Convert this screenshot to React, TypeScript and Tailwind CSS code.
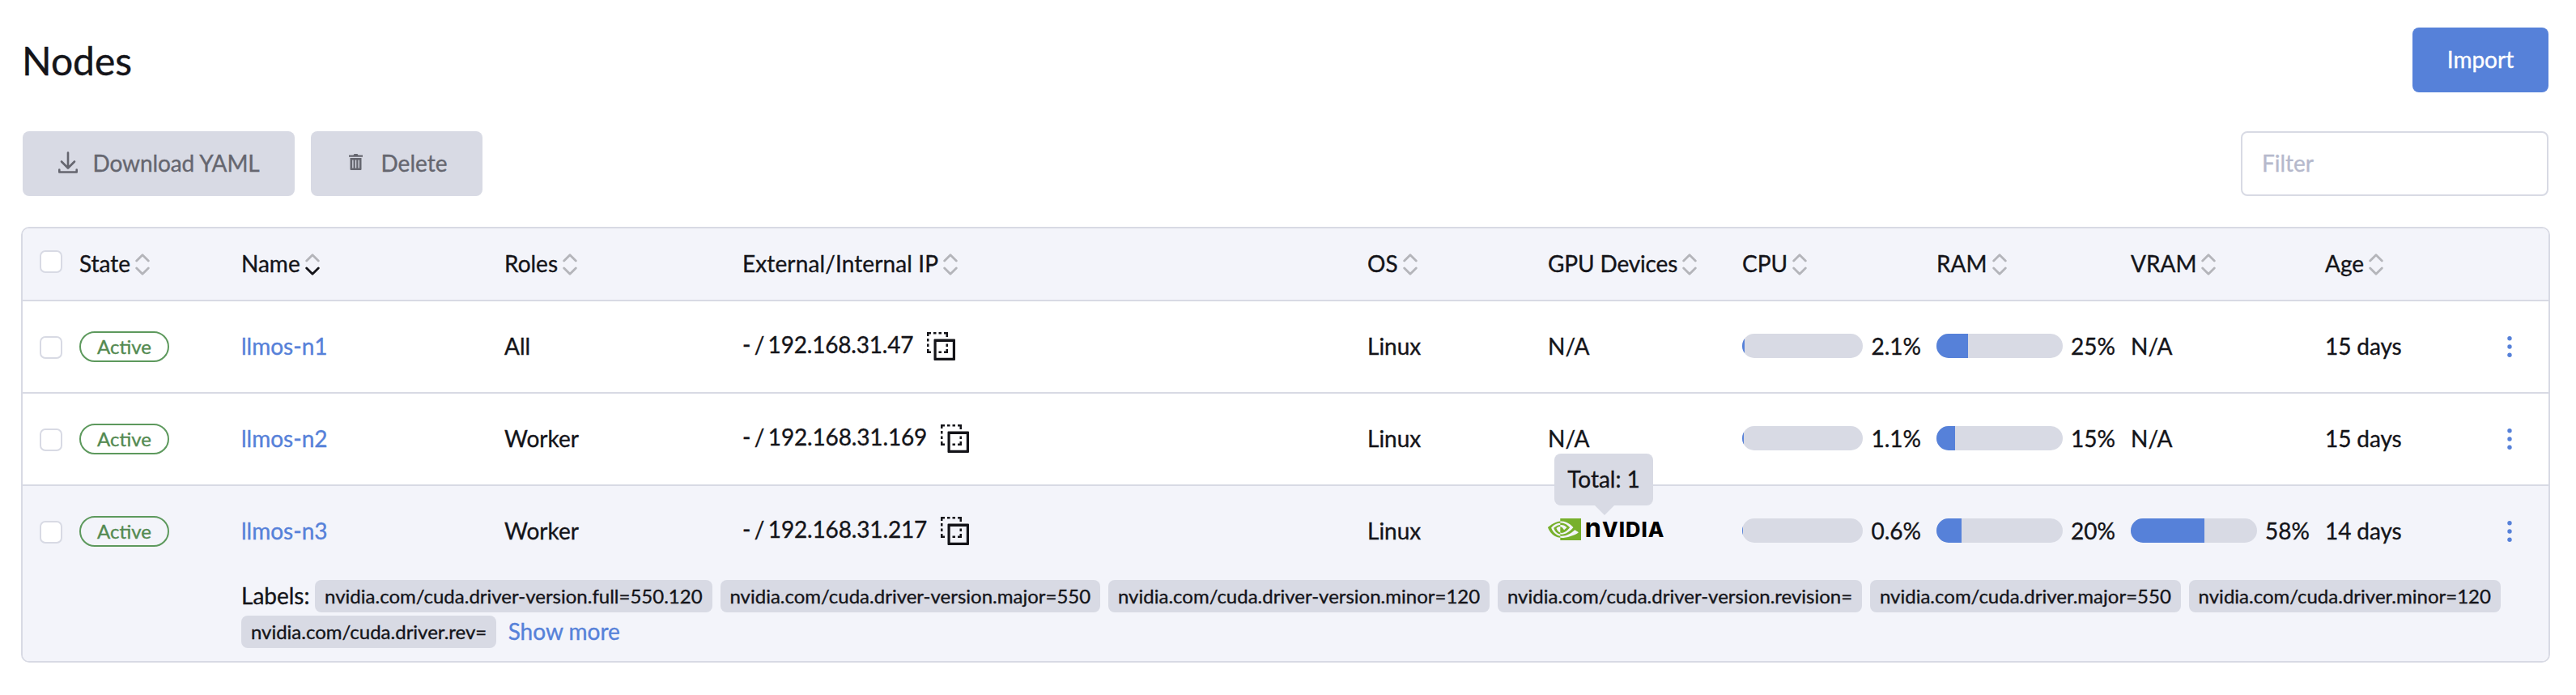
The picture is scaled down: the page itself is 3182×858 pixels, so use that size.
import React from "react";
import { SiNvidia } from "react-icons/si";

const COLS =
  "grid grid-cols-[70px_200px_325px_294px_772px_223px_240px_240px_240px_240px_170px_106px]";

function Sort({ active = false }: { active?: boolean }) {
  return (
    <svg className="mt-[2px] ml-[6px] h-[27px] w-[18px] shrink-0" viewBox="0 0 18 27" fill="none" strokeWidth="2.8" strokeLinecap="round" strokeLinejoin="round">
      <path d="M1.700 9 L9 1.700 L16.300 9" stroke="#b4b5ba" />
      <path d="M1.700 18 L9 25.300 L16.300 18" stroke={active ? "#141419" : "#b4b5ba"} />
    </svg>
  );
}

function Check({ className = "" }: { className?: string }) {
  return <div className={"h-7 w-7 rounded-[7px] border-2 border-[#d8dae4] bg-white " + className} />;
}

function CopyIcon() {
  return (
    <svg className="-mt-px ml-[16.5px] h-[35px] w-[35px] shrink-0" viewBox="0 0 35 35" fill="#141419">
      <path d="M0 0h5v2.500H2.500V5H0zM8 0h3.500v2.500H8zM14.500 0H18v2.500h-3.500zM21 0h5v6h-2.500V2.500H21zM0 8h2.500v3.500H0zM0 14.500h2.500V18H0zM0 21h2.500v2.500H5V26H0zM23.500 14.500H26V18h-2.500zM23.500 21H26v5h-5v-2.500h2.500zM14.500 23.500H18V26h-3.500z" />
      <path fillRule="evenodd" d="M9.500 8.500h24.500q1 0 1 1v24.500q0 1-1 1H9.500q-1 0-1-1V9.500q0-1 1-1zM11.700 12v19.800H31.800V12z" />
    </svg>
  );
}

function Bar({ value }: { value: number }) {
  const label = value + "%";
  return (
    <div className="flex items-center pr-[19px]">
      <div className="-mt-[2px] h-[30px] flex-1 overflow-hidden rounded-[15px] bg-[#d8dae4]">
        <div className="h-full bg-[#5681d9]" style={{ width: label }} />
      </div>
      <span className="-mt-[2px] ml-[10px]">{label}</span>
    </div>
  );
}

function Nvidia() {
  return (
    <div className="relative flex h-7 items-center">
      <SiNvidia className="-mt-[5px] h-[41px] w-[41px] shrink-0 text-[#77b02c]" />
      <span className="-mt-[7px] ml-[4.5px] flex items-baseline font-['Inter',sans-serif] leading-7 tracking-[1px] text-black [-webkit-text-stroke:0]">
        <span className="text-[33px] font-bold">n</span>
        <span className="text-[25.5px] font-extrabold">VIDIA</span>
      </span>
      <div className="absolute -top-[82px] left-[8px] flex h-16 w-[122px] items-center justify-center rounded-[8px] bg-[#d8dae4] pb-[2px]">
        Total: 1
        <svg className="absolute top-16 left-[50px] h-3 w-6" viewBox="0 0 24 12" fill="#d8dae4">
          <path d="M0 0h24L12 12z" />
        </svg>
      </div>
    </div>
  );
}

type Node = { name: string; role: string; ip: string; ipClass: string; cpu: number; ram: number; vram?: number; age: string };

const nodes: Node[] = [
  { name: "llmos-n1", role: "All", ip: "192.168.31.47", ipClass: "tracking-[-0.2px]", cpu: 2.1, ram: 25, age: "15 days" },
  { name: "llmos-n2", role: "Worker", ip: "192.168.31.169", ipClass: "tracking-[-0.15px]", cpu: 1.1, ram: 15, age: "15 days" },
  { name: "llmos-n3", role: "Worker", ip: "192.168.31.217", ipClass: "tracking-[-0.15px]", cpu: 0.6, ram: 20, vram: 58, age: "14 days" },
];

const labels = [
  "nvidia.com/cuda.driver-version.full=550.120",
  "nvidia.com/cuda.driver-version.major=550",
  "nvidia.com/cuda.driver-version.minor=120",
  "nvidia.com/cuda.driver-version.revision=",
  "nvidia.com/cuda.driver.major=550",
  "nvidia.com/cuda.driver.minor=120",
  "nvidia.com/cuda.driver.rev=",
];

const headers = ["State", "Name", "Roles", "External/Internal IP", "OS", "GPU Devices", "CPU", "RAM", "VRAM", "Age"];

const headerTracking: Record<string, string> = {
  "External/Internal IP": "tracking-[0.12px]",
  "GPU Devices": "tracking-[-0.15px]",
};

function Row({ n }: { n: Node }) {
  return (
    <div className={COLS + " h-[112px] items-center"}>
      <Check className="mt-[2px] ml-[21px]" />
      <div>
        <span className="flex h-[38px] w-[111px] items-center justify-center rounded-full border-2 border-[#5d995d] pb-px text-[24px] text-[#538a51]">Active</span>
      </div>
      <span className="-mt-[2px] text-[#5681d9]">{n.name}</span>
      <span className="-mt-[2px]">{n.role}</span>
      <span className="flex items-center">
        <span className={"-mt-[6px] [word-spacing:-2.5px] " + n.ipClass}>- / {n.ip}</span>
        <CopyIcon />
      </span>
      <span className="-mt-[2px]">Linux</span>
      {n.vram ? <Nvidia /> : <span className="-mt-[2px]">N/A</span>}
      <Bar value={n.cpu} />
      <Bar value={n.ram} />
      {n.vram ? <Bar value={n.vram} /> : <span className="-mt-[2px]">N/A</span>}
      <span className="-mt-[2px] tracking-[-0.1px]">{n.age}</span>
      <svg className="ml-[53px] h-7 w-[10px]" viewBox="0 0 10 28" fill="#5681d9">
        <circle cx="5" cy="3.700" r="2.700" />
        <circle cx="5" cy="14" r="2.700" />
        <circle cx="5" cy="24.300" r="2.700" />
      </svg>
    </div>
  );
}

export default function App() {
  return (
    <div className="h-[858px] w-[3182px] bg-white pr-8 pl-[26px] font-['Lato',sans-serif] text-[28px] leading-[42px] text-[#141419] [-webkit-text-stroke:0.35px]">
      <div className="flex h-[162px] justify-between pt-[34px] pr-[2px] pl-px">
        <h1 className="text-[48px] leading-[81px]">Nodes</h1>
        <button className="h-20 w-[168px] rounded-[8px] bg-[#5681d9] pb-[2px] text-white">Import</button>
      </div>
      <div className="flex h-[118px] items-start justify-between px-[2px]">
        <div className="flex gap-5 text-[#65666f]">
          <button className="flex h-20 w-[336px] items-center rounded-[8px] bg-[#d8dae4] pb-[2px] pl-[44px] tracking-[-0.1px]">
            <svg className="-mt-[2px] mr-[18.5px] h-[27px] w-6 shrink-0" viewBox="0 0 24 27" fill="none" stroke="#65666f" strokeWidth="2.600" strokeLinecap="round" strokeLinejoin="round">
              <path d="M12 1.500v18M4 12.500l8 8 8-8M1.300 22.500v3h21.400v-3" />
            </svg>
            Download YAML
          </button>
          <button className="flex h-20 w-[212px] items-center rounded-[8px] bg-[#d8dae4] pb-[2px] pl-[47px]">
            <svg className="-mt-[2px] mr-[22.5px] h-5 w-[17px] shrink-0" viewBox="0 0 17 20" fill="#65666f">
              <path fillRule="evenodd" d="M5.500 1.500L6.500 0h4l1 1.500H17v2.300H0V1.500zM1.500 5h14v14q0 1-1 1h-12q-1 0-1-1zM4.200 7.500v10h1.300v-10zM7.800 7.500v10h1.400v-10zM11.500 7.500v10h1.300v-10z" />
            </svg>
            Delete
          </button>
        </div>
        <div className="flex h-20 w-[380px] items-center rounded-[8px] border-2 border-[#d8dae4] pb-[2px] pl-[24px] text-[#b6b9cc]">Filter</div>
      </div>
      <div className="h-[538px] rounded-[10px] border-2 border-[#d8dae4]">
        <div className={COLS + " h-[90px] items-center rounded-t-[8px] border-b-2 border-[#d8dae4] bg-[#f3f4fa]"}>
          <Check className="-mt-[6px] ml-[21px]" />
          {headers.map((h) => (
            <div key={h} className="-mt-[2px] flex items-center">
              <span className={headerTracking[h]}>{h}</span>
              <Sort active={h === "Name"} />
            </div>
          ))}
        </div>
        <Row n={nodes[0]} />
        <div className="border-y-2 border-[#d8dae4]">
          <Row n={nodes[1]} />
        </div>
        <div className="h-[216px] rounded-b-[8px] bg-[#f3f4fa]">
          <Row n={nodes[2]} />
          <div className="flex flex-wrap items-center gap-y-1 pt-1 pr-10 pl-[270px] leading-10">
            <span className="mr-[6.7px] pb-[2px] leading-[38px]">Labels:</span>
            {labels.map((l) => (
              <span key={l} className="mr-[10px] h-10 rounded-[8px] bg-[#d8dae4] px-[11.9px] text-[24px]">
                {l}
              </span>
            ))}
            <span className="ml-[4.5px] pb-[2px] leading-[38px] text-[#5681d9]">Show more</span>
          </div>
        </div>
      </div>
    </div>
  );
}
